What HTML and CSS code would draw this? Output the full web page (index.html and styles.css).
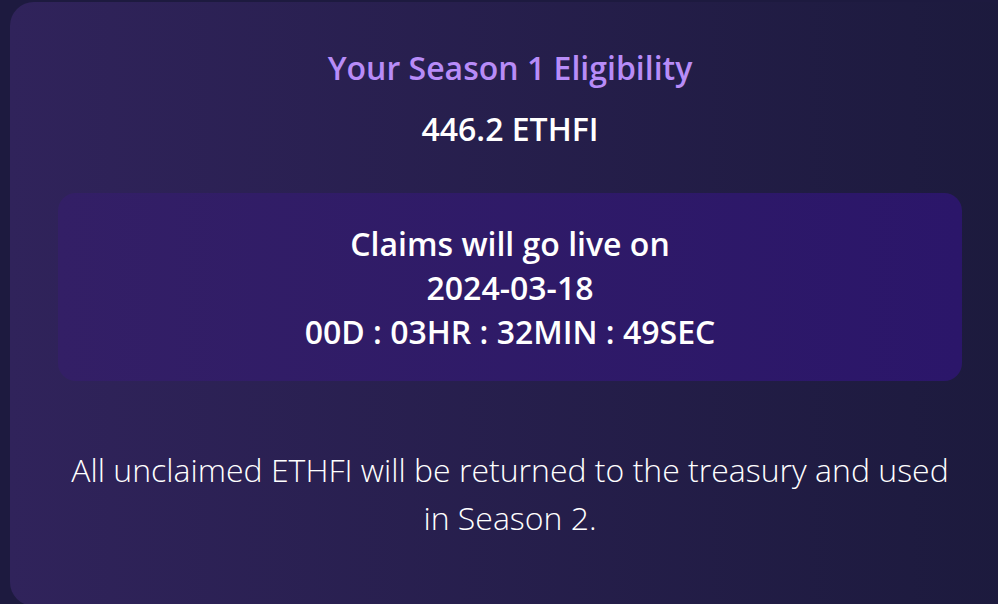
FILE: index.html
```html
<!DOCTYPE html>
<html>
<head>
<meta charset="utf-8">
<link rel="stylesheet" href="styles.css">
</head>
<body>
<div class="card">
  <h2 class="title">Your Season 1 Eligibility</h2>
  <div class="amount">446.2 ETHFI</div>
  <div class="claims">
    <div>Claims will go live on</div>
    <div>2024-03-18</div>
    <div>00D : 03HR : 32MIN : 49SEC</div>
  </div>
  <p class="note">All unclaimed ETHFI will be returned to the treasury and used in Season 2.</p>
</div>
</body>
</html>
```
FILE: styles.css
```css
html, body {
  margin: 0;
  padding: 0;
  background: #1d1a3f;
  overflow: hidden;
  height: 604px;
}
body {
  font-family: "Open Sans", sans-serif;
  color: #ffffff;
}
.card {
  margin: 2px 0 0 10px;
  width: 1000px;
  height: 604px;
  box-sizing: border-box;
  border-radius: 24px;
  background: linear-gradient(90deg, #30235b 0%, #1c1a3d 100%);
  padding: 46px 48px 0;
  text-align: center;
}
.title {
  margin: 0;
  font-size: 32px;
  line-height: 40px;
  font-weight: 600;
  color: #b88cf8;
}
.amount {
  margin-top: 23px;
  font-size: 32px;
  line-height: 36px;
  font-weight: 600;
}
.claims {
  margin-top: 46px;
  border-radius: 18px;
  background: linear-gradient(90deg, #331f66 0%, #2b166a 100%);
  padding: 29px 0 27px;
  font-size: 32px;
  line-height: 44px;
  font-weight: 600;
}
.note {
  margin: 65px 0 0;
  padding: 0 10px;
  font-size: 32px;
  line-height: 48px;
  font-weight: 300;
}
```
